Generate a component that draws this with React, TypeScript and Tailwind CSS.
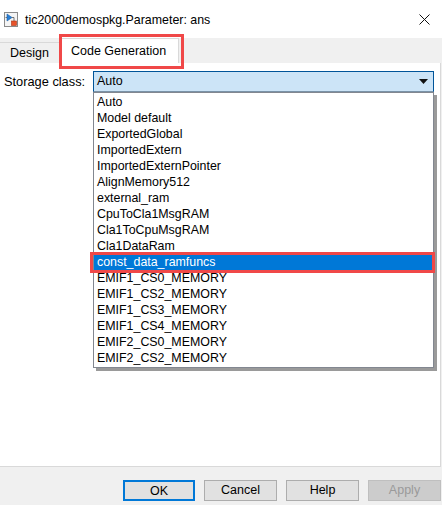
import React from "react";

const options = [
  "Auto",
  "Model default",
  "ExportedGlobal",
  "ImportedExtern",
  "ImportedExternPointer",
  "AlignMemory512",
  "external_ram",
  "CpuToCla1MsgRAM",
  "Cla1ToCpuMsgRAM",
  "Cla1DataRam",
  "const_data_ramfuncs",
  "EMIF1_CS0_MEMORY",
  "EMIF1_CS2_MEMORY",
  "EMIF1_CS3_MEMORY",
  "EMIF1_CS4_MEMORY",
  "EMIF2_CS0_MEMORY",
  "EMIF2_CS2_MEMORY"
];

function ModelIcon() {
  return (
    <svg width="15" height="16" viewBox="0 0 15 16">
      <rect x="0.5" y="0.5" width="13" height="14" fill="#f4f4f4" stroke="#8a8a8a" />
      <path d="M3 2 L3 9 L8 5.5 Z" fill="#2a7fd4" stroke="#1a5fa8" strokeWidth="0.6" />
      <path d="M3 5.5 H1.5 M8 5.5 H10 V9" stroke="#555" strokeWidth="0.8" fill="none" />
      <rect x="7.5" y="9" width="5" height="4.5" fill="#e8522a" stroke="#a83312" strokeWidth="0.6" />
    </svg>
  );
}

function Button({ label, primary, disabled }: { label: string; primary?: boolean; disabled?: boolean }) {
  return (
    <button
      disabled={disabled}
      className={
        primary
          ? "w-[72px] h-[21px] border-2 border-[#0078d7] bg-[#e1e1e1] text-black"
          : disabled
          ? "w-[73px] h-[21px] border border-[#bfbfbf] bg-[#cccccc] text-[#9a9a9a]"
          : "w-[73px] h-[21px] border border-[#adadad] bg-[#e1e1e1] text-black"
      }
    >
      {label}
    </button>
  );
}

export default function App() {
  return (
    <div className="w-[442px] h-[505px] bg-[#f0f0f0] flex flex-col font-['Liberation_Sans',Arial,sans-serif] text-black overflow-hidden">
      {/* title bar */}
      <div className="h-[38px] bg-white flex items-center pl-[4px] pr-[12px] shrink-0">
        <div className="mt-[2px]">
          <ModelIcon />
        </div>
        <div className="ml-[6px] text-[12.4px] mt-[2px]">tic2000demospkg.Parameter: ans</div>
        <div className="flex-1" />
        <svg width="11" height="11" viewBox="0 0 11 11" className="mt-[1px]">
          <path d="M0.5 0.5 L10.5 10.5 M10.5 0.5 L0.5 10.5" stroke="#111" strokeWidth="1" />
        </svg>
      </div>

      {/* tabs */}
      <div className="h-[25px] flex items-end shrink-0 text-[12.5px] relative">
        <div className="w-[60px] h-[21px] border border-b-0 border-[#d9d9d9] border-l-0 bg-[#f0f0f0] flex items-center pl-[10px]">
          Design
        </div>
        <div className="w-[120px] h-[25px] bg-white border-t border-r border-[#d9d9d9] flex items-center pl-[12px] -ml-px">
          Code Generation
        </div>
        <div className="absolute left-[59px] top-[-4px] w-[125px] h-[35px] border-[3px] border-[#f04848]" />
      </div>

      {/* panel */}
      <div className="h-[404px] w-[441px] bg-white border-r border-b border-[#d9d9d9] shrink-0 pt-[8px]">
        <div className="flex items-center">
          <div className="w-[93px] pl-[4px] text-[12.8px]">Storage class:</div>
          <div className="relative w-[341px]">
            <div className="h-[21px] bg-[#cce4f7] border border-[#005499] border-b-[#7a93a8] flex items-center pl-[3px] text-[12.5px]">
              <span className="flex-1">Auto</span>
              <svg width="9" height="5" viewBox="0 0 9 5" className="mr-[5px]">
                <path d="M0 0 H9 L4.5 5 Z" fill="#111" />
              </svg>
            </div>
            {/* open list */}
            <div className="absolute left-0 top-[21px] w-[341px] bg-white border border-[#828790] shadow-[3px_3px_0_#9a9a9a] py-[1px] text-[12.4px] z-10">
              {options.map((o) => {
                const sel = o === "const_data_ramfuncs";
                return (
                  <div
                    key={o}
                    className={
                      sel
                        ? "h-[16px] leading-[16px] pl-[3px] bg-[#0078d7] text-white relative"
                        : "h-[16px] leading-[16px] pl-[3px]"
                    }
                  >
                    {o}
                    {sel && (
                      <div className="absolute left-[-4px] right-[-2px] top-[-2px] bottom-[-3px] border-[3px] border-[#f04848]" />
                    )}
                  </div>
                );
              })}
            </div>
          </div>
        </div>
      </div>

      {/* footer */}
      <div className="flex justify-end gap-[9px] pt-[13px] pr-[1px] text-[12.5px]">
        <Button label="OK" primary />
        <Button label="Cancel" />
        <Button label="Help" />
        <Button label="Apply" disabled />
      </div>
    </div>
  );
}
